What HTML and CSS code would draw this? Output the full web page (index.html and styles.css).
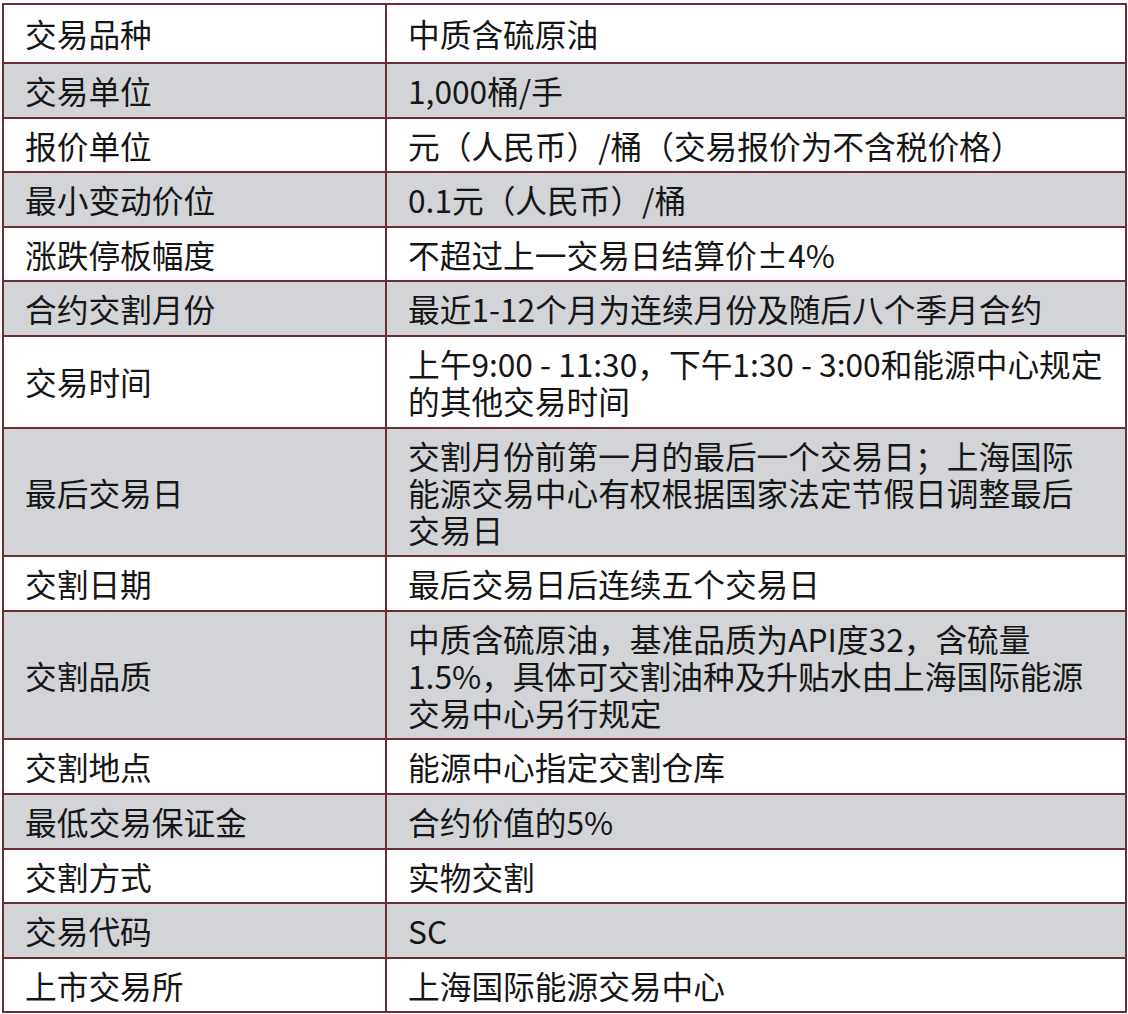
FILE: index.html
```html
<!DOCTYPE html>
<html lang="zh-CN">
<head>
<meta charset="utf-8">
<title>原油期货合约</title>
<link rel="stylesheet" href="styles.css">
</head>
<body>
<table class="spec">
  <colgroup><col class="c1"><col class="c2"></colgroup>
  <tbody>
    <tr class="first"><td>交易品种</td><td>中质含硫原油</td></tr>
    <tr class="alt"><td>交易单位</td><td>1,000桶/手</td></tr>
    <tr><td>报价单位</td><td>元（人民币）/桶（交易报价为不含税价格）</td></tr>
    <tr class="alt"><td>最小变动价位</td><td>0.1元（人民币）/桶</td></tr>
    <tr><td>涨跌停板幅度</td><td>不超过上一交易日结算价±4%</td></tr>
    <tr class="alt"><td>合约交割月份</td><td>最近1-12个月为连续月份及随后八个季月合约</td></tr>
    <tr><td>交易时间</td><td>上午9:00 - 11:30，下午1:30 - 3:00和能源中心规定<br>的其他交易时间</td></tr>
    <tr class="alt"><td>最后交易日</td><td>交割月份前第一月的最后一个交易日；上海国际<br>能源交易中心有权根据国家法定节假日调整最后<br>交易日</td></tr>
    <tr><td>交割日期</td><td>最后交易日后连续五个交易日</td></tr>
    <tr class="alt"><td>交割品质</td><td>中质含硫原油，基准品质为API度32，含硫量<br>1.5%，具体可交割油种及升贴水由上海国际能源<br>交易中心另行规定</td></tr>
    <tr><td>交割地点</td><td>能源中心指定交割仓库</td></tr>
    <tr class="alt"><td>最低交易保证金</td><td>合约价值的5%</td></tr>
    <tr><td>交割方式</td><td>实物交割</td></tr>
    <tr class="alt"><td>交易代码</td><td>SC</td></tr>
    <tr><td>上市交易所</td><td>上海国际能源交易中心</td></tr>
  </tbody>
</table>
</body>
</html>
```
FILE: styles.css
```css
html, body {
  margin: 0;
  padding: 0;
  background: #ffffff;
}

body {
  padding: 3px 0 0 2px;
  font-family: "Noto Sans CJK SC", "Noto Sans", sans-serif;
  color: #161616;
}

.spec {
  border-collapse: separate;
  border-spacing: 0;
  table-layout: fixed;
  width: 1125px;
  border-top: 2px solid #6a2e34;
  border-left: 2px solid #6a2e34;
  box-sizing: border-box;
}

.spec .c1 { width: 383px; }
.spec .c2 { width: 740px; }

.spec td {
  box-sizing: border-box;
  border-right: 2px solid #6a2e34;
  border-bottom: 2px solid #6a2e34;
  padding: 8px 6px 7.6px 21px;
  font-size: 31.7px;
  line-height: 37px;
  white-space: nowrap;
  vertical-align: middle;
  background: #ffffff;
}

.spec tr.alt td {
  background: #d2d4d7;
}

.spec tr.first td {
  padding-top: 10px;
  padding-bottom: 10px;
}
```
